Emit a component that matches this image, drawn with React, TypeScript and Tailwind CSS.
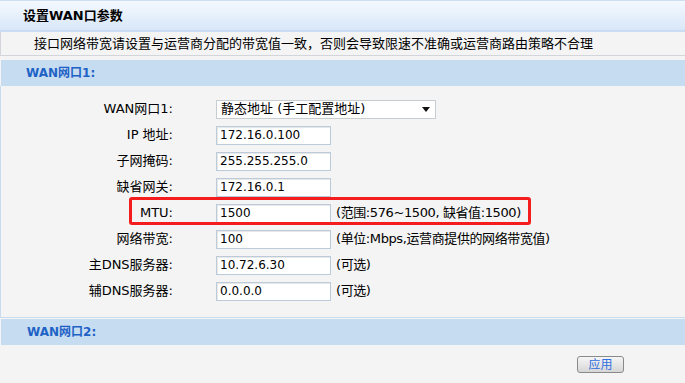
import React from "react";

type Row = {
  label: string;
  value: string;
  hint?: string;
};

const ROWS: Row[] = [
  { label: "IP 地址:", value: "172.16.0.100" },
  { label: "子网掩码:", value: "255.255.255.0" },
  { label: "缺省网关:", value: "172.16.0.1" },
  { label: "MTU:", value: "1500", hint: "(范围:576~1500, 缺省值:1500)" },
  { label: "网络带宽:", value: "100", hint: "(单位:Mbps,运营商提供的网络带宽值)" },
  { label: "主DNS服务器:", value: "10.72.6.30", hint: "(可选)" },
  { label: "辅DNS服务器:", value: "0.0.0.0", hint: "(可选)" },
];

function FieldRow({ label, children }: { label: string; children: React.ReactNode }) {
  return (
    <div className="flex h-[26px] items-center">
      <div className="w-[174px] shrink-0 pr-[2px] text-right">{label}</div>
      <div className="ml-[41px] flex items-center">{children}</div>
    </div>
  );
}

export default function App() {
  return (
    <div className="relative h-[383px] w-[685px] overflow-hidden bg-[#f4f4f4] font-['DejaVu_Sans','Noto_Sans_CJK_SC',sans-serif] text-[13px] text-black">
      {/* title bar */}
      <div className="flex h-[32px] items-center border-t border-b-2 border-t-[#cddff2] border-b-[#c9dcf1] bg-gradient-to-b from-[#f5f9ff] to-[#d8e7f8] pl-[23px] font-bold">
        设置WAN口参数
      </div>

      {/* notice */}
      <div className="flex h-[24px] items-center border-b border-l border-[#d2d6da] pl-[33px]">
        接口网络带宽请设置与运营商分配的带宽值一致，否则会导致限速不准确或运营商路由策略不合理
      </div>

      {/* WAN 1 */}
      <div className="ml-px mt-[4px] flex h-[26px] items-center bg-[#c6dcf0] pl-[25px] text-[12px] font-bold text-[#1e62c6]">
        WAN网口1:
      </div>

      <div className="border-b border-l border-[#c8dcf0] pb-[13px] pt-[10px]">
        <FieldRow label="WAN网口1:">
          <div className="flex h-[19px] w-[220px] items-center justify-between border border-[#c8cdd2] bg-white pl-[4px] pr-[5px]">
            <span>静态地址 (手工配置地址)</span>
            <svg width="8" height="5" viewBox="0 0 8 5">
              <path d="M0 0 H8 L4 5 Z" fill="#111" />
            </svg>
          </div>
        </FieldRow>
        {ROWS.map((r) => (
          <FieldRow key={r.label} label={r.label}>
            <input
              readOnly
              value={r.value}
              className="h-[19px] w-[115px] border border-[#bccbda] bg-white pl-[3px] text-[12px] shadow-[inset_1px_1px_0_#e8e8e8] outline-none"
            />
            {r.hint ? <span className="ml-[5px] tracking-[-0.4px]">{r.hint}</span> : null}
          </FieldRow>
        ))}
      </div>

      {/* WAN 2 */}
      <div className="ml-px mt-px flex h-[26px] items-center bg-[#c6dcf0] pl-[26px] text-[12px] font-bold text-[#1e62c6]">
        WAN网口2:
      </div>

      <div className="flex justify-end pr-[61px] pt-[11px]">
        <button
          type="button"
          className="flex h-[17px] w-[47px] items-center justify-center rounded-[3px] border border-[#8a8a8a] bg-gradient-to-b from-[#f6f6f6] to-[#d6d6d6] text-[12px] leading-none text-[#2f6fe0]"
        >
          应用
        </button>
      </div>

      {/* annotation */}
      <div className="pointer-events-none absolute left-[129px] top-[197px] h-[28px] w-[402px] rounded-[3px] border-[3px] border-[#f41c1c]" />
    </div>
  );
}
